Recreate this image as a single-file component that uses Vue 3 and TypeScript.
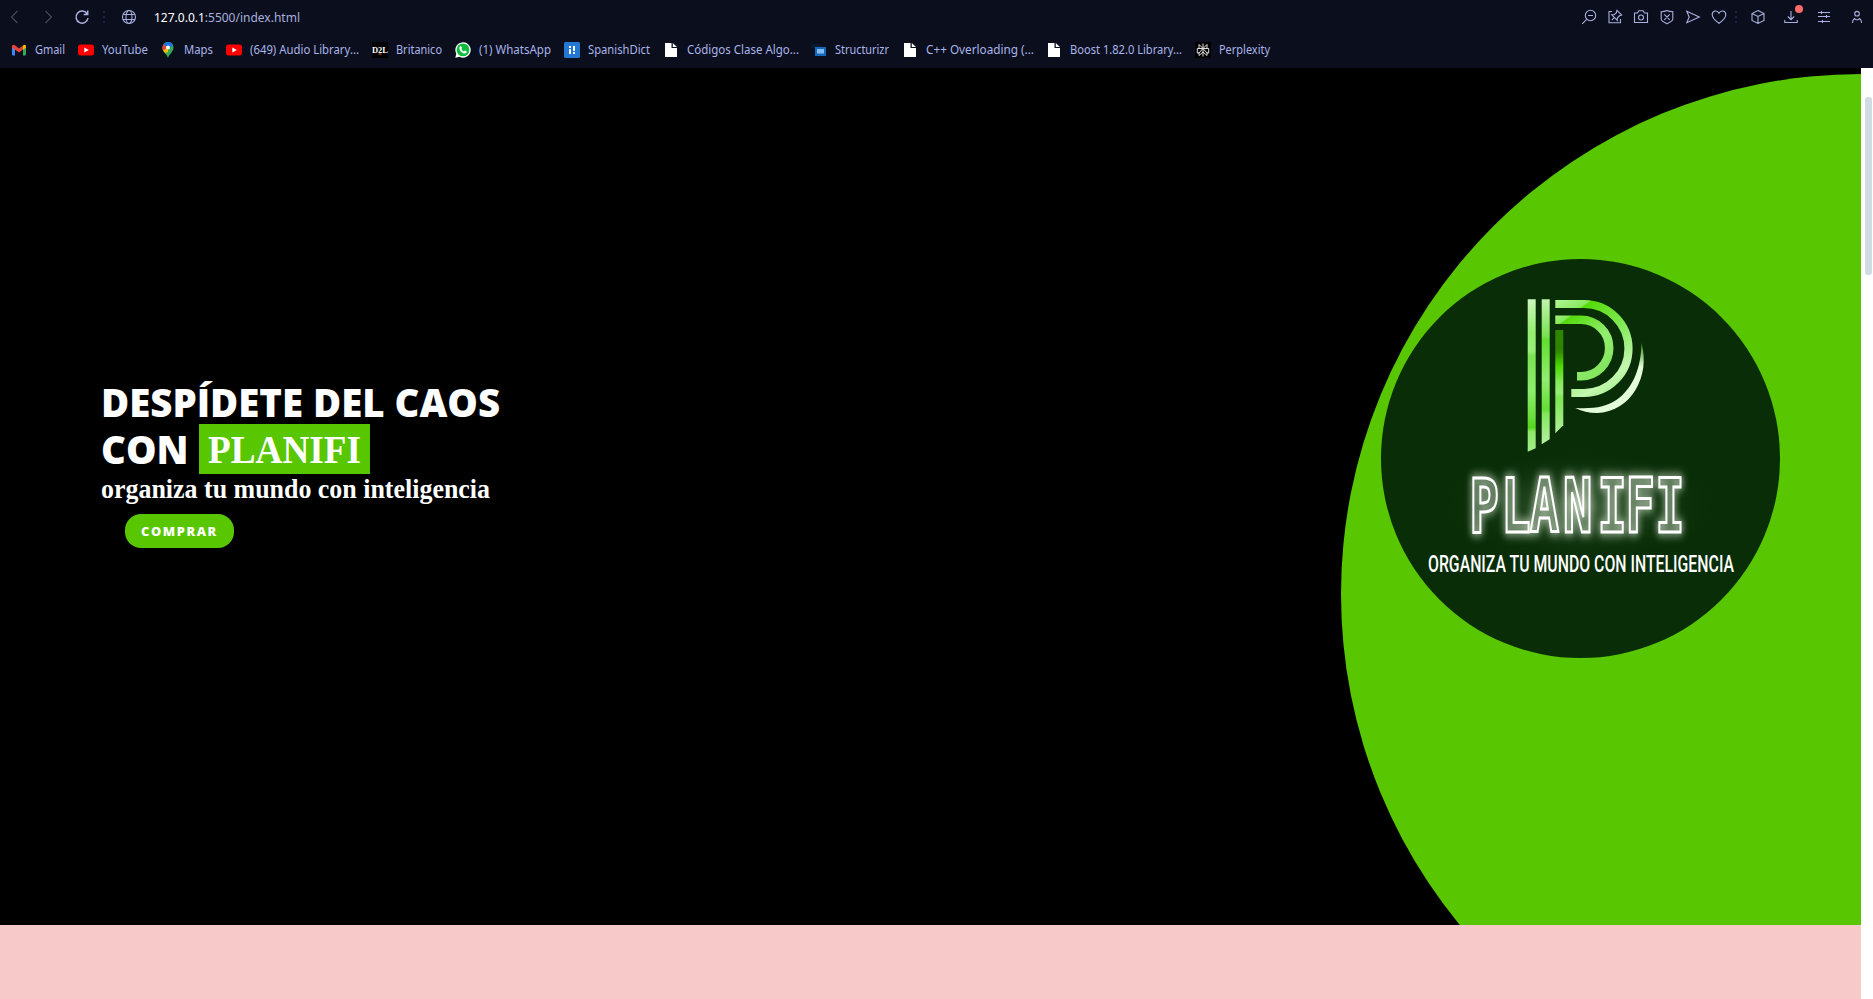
<script setup lang="ts">
interface Bookmark { label: string; icon: string; width: number; text: number }

const bookmarks: Bookmark[] = [
  { label: 'Gmail', icon: 'gmail', width: 67, text: 30 },
  { label: 'YouTube', icon: 'youtube', width: 82, text: 46 },
  { label: 'Maps', icon: 'maps', width: 66, text: 29 },
  { label: '(649) Audio Library...', icon: 'youtube', width: 146, text: 109 },
  { label: 'Britanico', icon: 'd2l', width: 83, text: 46 },
  { label: '(1) WhatsApp', icon: 'whatsapp', width: 109, text: 72 },
  { label: 'SpanishDict', icon: 'spanish', width: 99, text: 62 },
  { label: 'Códigos Clase Algo...', icon: 'doc', width: 148, text: 112 },
  { label: 'Structurizr', icon: 'structurizr', width: 91, text: 54 },
  { label: 'C++ Overloading (...', icon: 'doc', width: 144, text: 108 },
  { label: 'Boost 1.82.0 Library...', icon: 'doc', width: 149, text: 112 },
  { label: 'Perplexity', icon: 'perplexity', width: 80, text: 51 },
]
</script>

<template>
  <div class="window">
    <header class="chrome">
      <div class="toolbar">
        <svg class="ic back dim" viewBox="0 0 16 16"><path d="M10.500 2 4.500 8l6 6" /></svg>
        <svg class="ic forward dim" viewBox="0 0 16 16"><path d="m5.500 2 6 6-6 6" /></svg>
        <svg class="ic reload" viewBox="0 0 16 16"><path class="thick" d="M13 4.700A6 6 0 1 0 14 9M13.700 1.500v4h-4" /></svg>
        <span class="dots"><i></i><i></i><i></i></span>
        <svg class="ic globe" viewBox="0 0 16 16"><circle cx="8" cy="8" r="6.500" /><ellipse cx="8" cy="8" rx="3" ry="6.500" /><path d="M2.200 5.500h11.600M2.200 10.500h11.600" /></svg>
        <svg class="url" width="150" height="20"><text x="0" y="15" textLength="146" lengthAdjust="spacingAndGlyphs"><tspan class="host">127.0.0.1</tspan>:5500/index.html</text></svg>
        <div class="actions">
          <svg class="ic" viewBox="0 0 16 16"><circle cx="9.500" cy="6.500" r="5.200" /><path d="M5.700 10.300 1.200 14.800M7 6.500h5" /></svg>
          <svg class="ic" viewBox="0 0 16 16"><path d="M5 2.500H2v11.300h11.500V10M4.800 11.200l2.500-2.700M10 1.300l4.700 4.700-2.200.8-2.200 2.200v2.300L4.800 5.800h2.400l2.200-2.200z" /></svg>
          <svg class="ic" viewBox="0 0 16 16"><path d="M1.500 4h3l1.300-2.200h4.400L11.500 4h3v9.500h-13z" /><circle cx="8" cy="8.500" r="2.500" /></svg>
          <svg class="ic" viewBox="0 0 16 16"><path d="M8 1.500C10 2.500 12 2.700 13.800 2.800v7.200c0 2-3.300 3.600-5.800 4.800-2.500-1.200-5.800-2.800-5.800-4.800V2.800C4 2.700 6 2.500 8 1.500zM5.300 5.400l5.400 5.400M10.700 5.400l-5.400 5.400" /></svg>
          <svg class="ic" viewBox="0 0 16 16"><path d="M1.800 2.300 14.300 8 1.800 13.700 4.200 8z" /></svg>
          <svg class="ic" viewBox="0 0 16 16"><path d="M8 14.300C4.500 11.700 1.200 9.300 1.200 5.700c0-4 5-5.200 6.800-1.500 1.800-3.700 6.800-2.500 6.800 1.500 0 3.600-3.300 6-6.800 8.600z" /></svg>
          <span class="dots"><i></i><i></i><i></i></span>
          <svg class="ic cube" viewBox="0 0 16 16"><path d="m8 1.500 6 3v7l-6 3-6-3v-7zM2 4.500l6 3 6-3M8 7.500v7" /></svg>
          <span class="download"><svg class="ic" viewBox="0 0 16 16"><path d="M8 2v8.500M4.800 7.500 8 10.700l3.200-3.200M1.800 11v2.500h12.400V11" /></svg><b class="badge"></b></span>
          <svg class="ic sliders" viewBox="0 0 16 16"><path d="M2 3.500h12M2 7.500h12M2 12.500h12M5.500 2v3M10.500 6v3M6.500 11v3" /></svg>
          <svg class="ic person" viewBox="0 0 16 16"><circle cx="8" cy="4.700" r="2.300" /><path d="M3.500 14c0-2.600.8-3.700 2-4.500L7 10.800h2l1.500-1.300c1.200.8 2 1.900 2 4.500" /></svg>
        </div>
      </div>
      <nav class="bookmarks">
        <div v-for="b in bookmarks" :key="b.label" class="bookmark" :style="{ width: b.width + 'px' }">
          <svg v-if="b.icon === 'gmail'" class="fav" viewBox="0 0 16 16"><path fill="#4285f4" d="M1 4h3v9.500H2.200Q1 13.500 1 12.500z" /><path fill="#34a853" d="M12 4h3v8.500q0 1-1.200 1H12z" /><path fill="#ea4335" d="M1 4.500Q1 2 3.500 3L8 6.500l4-3.100v4.200L8 10.500 1 5.500z" /><path fill="#fbbc04" d="M12 3.400Q15 1.500 15 4.500v1L12 7.800z" /></svg>
          <svg v-else-if="b.icon === 'youtube'" class="fav" viewBox="0 0 16 16"><rect y="2.500" width="16" height="11" rx="2.500" fill="#f00" /><path fill="#fff" d="m6.300 5.600 4.500 2.400-4.500 2.400z" /></svg>
          <svg v-else-if="b.icon === 'maps'" class="fav" viewBox="0 0 16 16"><path fill="#34a853" d="M8 16C7 12 2.500 10 2.500 5.700c0-7.500 11-7.500 11 0C13.500 10 9 12 8 16z" /><path fill="#fbbc04" d="M2.600 6.500 8 5v5l-3 1C4 9.700 2.800 8.500 2.600 6.500z" /><path fill="#1a73e8" d="M3.500 2.800C6-.8 11-.8 13 3L8 7z" /><path fill="#ea4335" d="M3.700 2.500 8 5.500 3 8.500C2 6 2.300 4 3.700 2.500z" /><circle cx="8" cy="5.600" r="2" fill="#fff" /></svg>
          <svg v-else-if="b.icon === 'd2l'" class="fav" viewBox="0 0 16 16"><rect width="16" height="16" fill="#000" /><text class="d2l" x="0" y="11" textLength="16" lengthAdjust="spacingAndGlyphs">D2L</text><path stroke="#d06a20" d="M6.500 12h3" /></svg>
          <svg v-else-if="b.icon === 'whatsapp'" class="fav" viewBox="0 0 16 16"><path fill="#fff" d="m.3 15.700 1-4A7.700 7.700 0 1 1 4.500 14.800z" /><circle cx="8" cy="7.900" r="6.400" fill="#0fbd3e" /><path fill="#fff" d="M5 4.200h1.200L7.100 6l-.8 1.100q.9 1.700 2.600 2.500l1-1 1.900.9q-.2 2-2 2.100C6.500 11.500 2.900 6.500 5 4.200z" /></svg>
          <svg v-else-if="b.icon === 'spanish'" class="fav" viewBox="0 0 16 16"><rect width="16" height="16" rx="1.500" fill="#2478d4" /><path fill="#fff" d="M5 4h2v2H5zM5 7h2v5H5zM9 4h2v5H9zM9 10h2v2H9z" /></svg>
          <svg v-else-if="b.icon === 'doc'" class="fav" viewBox="0 0 16 16"><path fill="#fff" d="M2 1h6.500v5H14v9H2zM9.800 1 14 5H9.800z" /></svg>
          <svg v-else-if="b.icon === 'structurizr'" class="fav" viewBox="0 0 16 16"><path fill="#081a30" d="M0 2h10v4H0z" /><rect x="4" y="5" width="11" height="9" fill="#1168bd" /><rect x="6" y="7" width="7" height="4.500" fill="#85bbf0" /></svg>
          <svg v-else class="fav" viewBox="0 0 16 16"><rect width="16" height="16" fill="#000" /><path fill="none" stroke="#ddd" d="M8 1.500v13M4 2.500l4 4 4-4v4H4zM4 6.500H2.300V11H4l4-4.500L12 11h1.700V6.500H12M4 10v3.500l4-3.500 4 3.500V10" /></svg>
          <svg class="label" :width="b.text + 2" height="18"><text x="0" y="13" :textLength="b.text" lengthAdjust="spacingAndGlyphs">{{ b.label }}</text></svg>
        </div>
      </nav>
    </header>

    <div class="viewport">
      <main class="page">
        <section class="hero">
          <div class="circle"></div>
          <div class="copy">
            <h1>
              <span class="row">DESPÍDETE DEL CAOS</span>
              <span class="row">CON <span class="brand"><svg width="171" height="50"><text x="9" y="39" textLength="153" lengthAdjust="spacingAndGlyphs">PLANIFI</text></svg></span></span>
            </h1>
            <p class="tagline"><svg width="400" height="34"><text x="0" y="25" textLength="389" lengthAdjust="spacingAndGlyphs">organiza tu mundo con inteligencia</text></svg></p>
            <button class="buy" type="button">COMPRAR</button>
          </div>
          <svg class="logo" viewBox="0 0 399 399">
            <defs>
              <linearGradient id="bar" x1="0" y1="0" x2="0" y2="1">
                <stop offset="0" stop-color="#ccf7bd" /><stop offset=".22" stop-color="#94ee71" /><stop offset=".34" stop-color="#9bef79" /><stop offset=".37" stop-color="#7be353" /><stop offset=".6" stop-color="#8dee6b" /><stop offset=".78" stop-color="#69de3c" /><stop offset=".84" stop-color="#52d51d" /><stop offset=".87" stop-color="#8ee86c" /><stop offset="1" stop-color="#a2ed88" />
              </linearGradient>
              <linearGradient id="bar2" x1="0" y1="0" x2="0" y2="1">
                <stop offset="0" stop-color="#c1f4ac" /><stop offset=".25" stop-color="#7be353" /><stop offset=".28" stop-color="#60df2d" /><stop offset=".55" stop-color="#91ed70" /><stop offset=".76" stop-color="#65de35" /><stop offset=".79" stop-color="#83e75e" /><stop offset="1" stop-color="#b5f1a0" />
              </linearGradient>
              <linearGradient id="bar3" x1="0" y1="0" x2="0" y2="1">
                <stop offset="0" stop-color="#308500" /><stop offset=".2" stop-color="#308500" /><stop offset=".35" stop-color="#4bd900" /><stop offset=".5" stop-color="#82e957" /><stop offset=".6" stop-color="#98ec7a" /><stop offset=".66" stop-color="#7de752" /><stop offset="1" stop-color="#b1ee9b" />
              </linearGradient>
              <linearGradient id="outer" gradientUnits="userSpaceOnUse" x1="174" y1="42" x2="238" y2="136">
                <stop offset="0" stop-color="#b1f595" /><stop offset=".17" stop-color="#88e95c" /><stop offset=".18" stop-color="#55db09" /><stop offset=".5" stop-color="#81e957" /><stop offset=".83" stop-color="#c4f7b1" /><stop offset="1" stop-color="#a2ef85" />
              </linearGradient>
              <linearGradient id="inner" gradientUnits="userSpaceOnUse" x1="174" y1="58" x2="218" y2="120">
                <stop offset="0" stop-color="#a6f27f" /><stop offset=".1" stop-color="#82e957" /><stop offset=".12" stop-color="#54da0b" /><stop offset=".55" stop-color="#93ed70" /><stop offset="1" stop-color="#82e45c" />
              </linearGradient>
              <linearGradient id="crescent" gradientUnits="userSpaceOnUse" x1="260" y1="84" x2="258" y2="108">
                <stop offset="0" stop-color="#2f8d0b" /><stop offset="1" stop-color="#e3fcda" />
              </linearGradient>
              <radialGradient id="haze"><stop offset="0" stop-color="#5d7b57" stop-opacity=".75" /><stop offset=".5" stop-color="#31542c" stop-opacity=".4" /><stop offset="1" stop-color="#0a2e08" stop-opacity="0" /></radialGradient>
              <filter id="glow" x="-20%" y="-40%" width="140%" height="180%"><feGaussianBlur stdDeviation="5" /></filter>
            </defs>
            <circle cx="199.500" cy="199.500" r="199.500" fill="#082d07" />
            <path fill="url(#bar)" d="M146.700 40.300h8v149l-8 3.400z" />
            <path fill="url(#bar2)" d="M160.700 40.300h8v140l-8 5z" />
            <path fill="url(#bar3)" d="M174.300 71h8v95.300l-8 8z" />
            <path fill="none" stroke="url(#outer)" stroke-width="8.200" d="M174.300 45H203a44.500 44.500 0 0 1 0 89h-12.700" />
            <path fill="none" stroke="url(#inner)" stroke-width="8.600" d="M174.300 60.800H200a28.200 28.200 0 0 1 0 56.400h-4" />
            <path fill="url(#crescent)" d="M260.300 83.700C270 117 250 153 216 154q-12 0-21.700-5C213 150 225 148 236 140.500c15-10.500 24.500-31 24.300-56.800z" />
            <ellipse cx="200" cy="247" rx="140" ry="56" fill="url(#haze)" />
            <g transform="scale(.65 1)">
              <text class="neon halo" x="136 185 229 280 333 376 422" y="273.500" filter="url(#glow)">PLANIFI</text>
              <text class="neon" x="136 185 229 280 333 376 422" y="273.500">PLANIFI</text>
            </g>
            <text class="motto" x="47" y="313" textLength="306" lengthAdjust="spacingAndGlyphs">ORGANIZA TU MUNDO CON INTELIGENCIA</text>
          </svg>
        </section>
        <section class="next"></section>
      </main>
      <aside class="scrollbar"><div class="thumb"></div></aside>
    </div>
  </div>
</template>

<style>
body { margin: 0; overflow: hidden; }
</style>

<style scoped>
.window { width: 1873px; height: 999px; display: flex; flex-direction: column; overflow: hidden; font-family: "Open Sans", sans-serif; }
.chrome { height: 68px; background: #0b0e1c; color: #a9b0df; flex: none; }
.toolbar { height: 34px; display: flex; align-items: center; box-sizing: border-box; padding: 0 8px 0 7px; }
.ic { width: 16px; height: 16px; flex: none; display: block; fill: none; stroke: #a9b0df; stroke-width: 1.1; }
.thick { stroke-width: 1.5; }
.dim { stroke: #444963; }
.forward { margin-left: 17px; }
.reload { margin-left: 18px; }
.dots { width: 2px; display: flex; flex-direction: column; gap: 3px; flex: none; margin-left: 13px; }
.dots i { width: 2px; height: 2px; background: #1c2442; }
.globe { margin-left: 16px; }
.url { margin-left: 17px; display: block; font: 12.500px "Noto Sans", sans-serif; fill: #a9b0df; }
.host { fill: #fff; }
.actions { margin-left: auto; display: flex; align-items: center; gap: 10px; }
.actions .dots { margin: 0 2px 0 -2px; }
.download { position: relative; margin: 0 7px 0 7px; }
.cube { margin-left: 1px; }
.person { margin-left: 7px; }
.badge { position: absolute; width: 8px; height: 8px; border-radius: 50%; background: #ff6b6b; left: 12px; top: -4px; }
.bookmarks { display: flex; height: 32px; padding-left: 11px; align-items: center; }
.bookmark { display: flex; align-items: center; gap: 8px; flex: none; }
.fav { width: 16px; height: 16px; flex: none; display: block; }
.label { display: block; flex: none; overflow: visible; font: 12px "Noto Sans", sans-serif; fill: #a9b4ea; }
.d2l { font: bold 8px "Liberation Serif", serif; fill: #fff; }
.viewport { flex: 1; display: flex; min-height: 0; }
.page { width: 1861px; display: flex; flex-direction: column; }
.hero { height: 857px; flex: none; position: relative; overflow: hidden; background: #000; box-sizing: border-box; display: flex; justify-content: space-between; padding: 0 81px 0 101px; }
.circle { position: absolute; width: 1040px; height: 1040px; border-radius: 50%; background: #58c600; top: 6px; right: -520px; }
.copy { position: relative; padding-top: 311px; color: #fff; }
h1 { margin: 0; font: 800 38.400px/46px "Open Sans", sans-serif; white-space: nowrap; }
.row { display: block; height: 46px; }
.row:first-child { height: 47px; }
.brand { display: inline-block; height: 50px; width: 171px; margin: -2px 0; vertical-align: top; background: #58c600; }
.brand svg { display: block; overflow: visible; font: bold 41px "Liberation Serif", serif; fill: #fff; }
.tagline { margin: 0; height: 32px; }
.tagline svg { display: block; overflow: visible; font: bold 26.500px "Liberation Serif", serif; fill: #fff; margin-top: 1px; }
.buy { display: block; margin: 9px 0 0 24px; width: 109px; height: 34px; padding: 0; border: 0; border-radius: 16px; background: #58c600; color: #fff; font: 800 12.800px/34px "Open Sans", sans-serif; letter-spacing: 1.600px; }
.logo { position: relative; overflow: visible; width: 399px; height: 399px; margin-top: 191px; flex: none; }
.neon { font: bold 75px "DejaVu Sans Mono", monospace; fill: none; stroke: #fff; stroke-width: 3px; }
.halo { stroke: #e4f0df; stroke-width: 5.500px; opacity: .8; }
.motto { font: 500 24.400px Roboto, sans-serif; fill: #fff; }
.next { flex: 1; background: #f7c9c9; }
.scrollbar { width: 12px; background: #fff; }
.thumb { width: 7px; height: 178px; margin: 29px 0 0 4px; border-radius: 3px; background: #d0dbe4; }
</style>
